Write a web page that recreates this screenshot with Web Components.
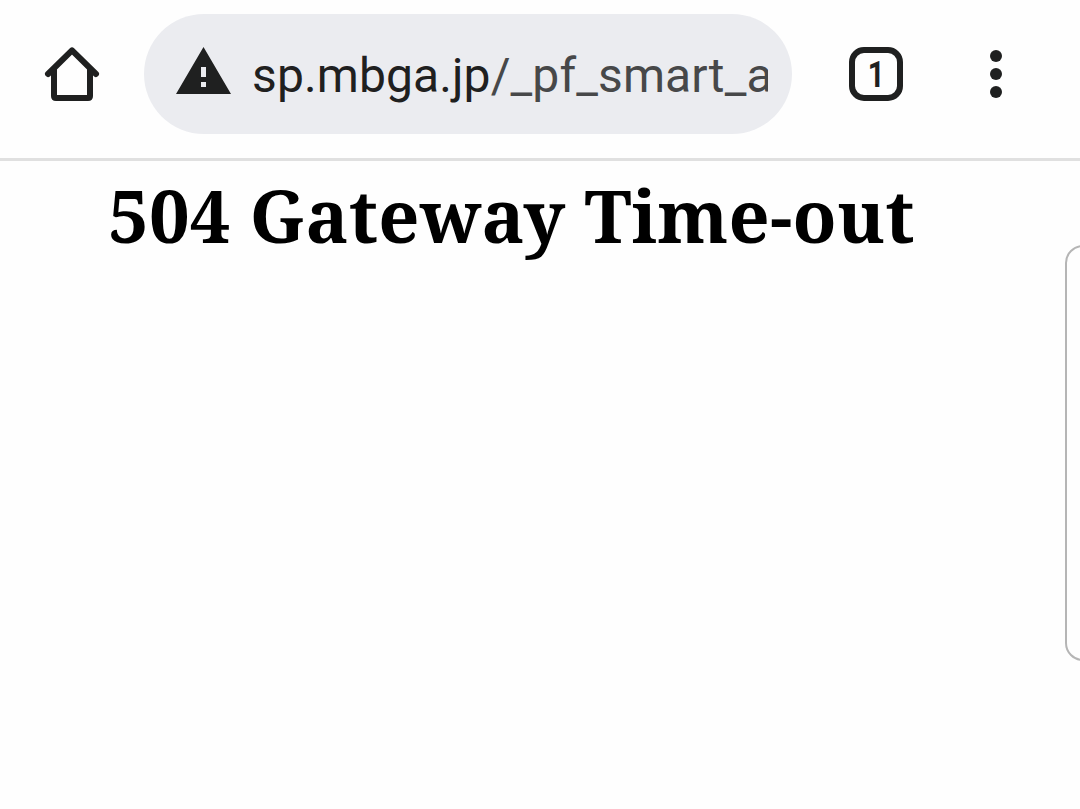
<!DOCTYPE html>
<html lang="en">
<head>
<meta charset="UTF-8">
<title>504 Gateway Time-out</title>
<style>
    body {
        margin: 0;
        height: 809px;
        overflow: hidden;
        background: #fefefe;
        color: #1f2020;
        font-family: Roboto, sans-serif;
    }
</style>
</head>
<body>
<browser-toolbar>
    <home-button></home-button>
    <address-bar>sp.mbga.jp<span slot="path">/_pf_smart_a</span></address-bar>
    <tab-counter>1</tab-counter>
    <menu-button></menu-button>
</browser-toolbar>
<error-page>
    504 Gateway Time-out
    <edge-panel slot="side"></edge-panel>
</error-page>

<script>
class BrowserToolbar extends HTMLElement {
    connectedCallback() {
        this.attachShadow({ mode: 'open' });
        this.shadowRoot.innerHTML = `
            <style>
                :host {
                    display: grid;
                    grid-template-columns: 144px 648px 168px 72px;
                    height: 120px;
                    padding: 14px 0 24px;
                    border-bottom: 3px solid #e0e0e0;
                }
            </style>
            <slot></slot>
        `;
    }
}

class HomeButton extends HTMLElement {
    connectedCallback() {
        this.attachShadow({ mode: 'open' });
        this.shadowRoot.innerHTML = `
            <style>
                :host {
                    display: flex;
                    align-items: center;
                    justify-content: center;
                }
            </style>
            <svg width="60" height="60" viewBox="0 0 60 60" fill="none" stroke="currentColor" stroke-width="6" stroke-linecap="round" stroke-linejoin="round">
                <path d="M6 30 L30 6.4 L54 30"/>
                <path d="M12 26 V52 Q12 54 14 54 H46 Q48 54 48 52 V26"/>
            </svg>
        `;
    }
}

class AddressBar extends HTMLElement {
    connectedCallback() {
        this.attachShadow({ mode: 'open' });
        this.shadowRoot.innerHTML = `
            <style>
                :host {
                    display: flex;
                    align-items: center;
                    box-sizing: border-box;
                    padding: 0 24px 0 32px;
                    border-radius: 60px;
                    background: #ebecf0;
                }

                svg {
                    flex: none;
                    margin-right: 21px;
                }

                .url {
                    width: 516px;
                    overflow: hidden;
                    white-space: nowrap;
                    font-size: 48px;
                    line-height: 60px;
                    letter-spacing: 0.11px;
                    padding-top: 3px;
                }

                ::slotted([slot="path"]) {
                    color: #474849;
                }
            </style>
            <svg width="55" height="54" viewBox="0 0 55 54">
                <path fill="currentColor" fill-rule="evenodd" d="M27.5 0 L55 47 H0 Z M25 20 V30 H30 V20 Z M25 35 V40 H30 V35 Z"/>
            </svg>
            <div class="url"><slot></slot><slot name="path"></slot></div>
        `;
    }
}

class TabCounter extends HTMLElement {
    connectedCallback() {
        this.attachShadow({ mode: 'open' });
        this.shadowRoot.innerHTML = `
            <style>
                :host {
                    display: flex;
                    align-items: center;
                    justify-content: center;
                }

                .box {
                    width: 42px;
                    height: 42px;
                    border: 6px solid currentColor;
                    border-radius: 15px;
                    font-size: 36px;
                    font-weight: 700;
                    line-height: 44px;
                    text-align: center;
                }

                .count {
                    display: inline-block;
                    transform: scaleX(0.82);
                }
            </style>
            <div class="box"><span class="count"><slot></slot></span></div>
        `;
    }
}

class MenuButton extends HTMLElement {
    connectedCallback() {
        this.attachShadow({ mode: 'open' });
        this.shadowRoot.innerHTML = `
            <style>
                :host {
                    display: flex;
                    align-items: center;
                    justify-content: center;
                }
            </style>
            <svg width="12" height="48" viewBox="0 0 12 48" fill="currentColor">
                <circle cx="6" cy="6" r="6"/>
                <circle cx="6" cy="24" r="6"/>
                <circle cx="6" cy="42" r="6"/>
            </svg>
        `;
    }
}

class ErrorPage extends HTMLElement {
    connectedCallback() {
        this.attachShadow({ mode: 'open' });
        this.shadowRoot.innerHTML = `
            <style>
                :host {
                    display: flex;
                    height: 648px;
                    overflow: hidden;
                }

                h1 {
                    flex: none;
                    box-sizing: border-box;
                    width: 1065px;
                    margin: 0;
                    padding: 5px 0 0 108px;
                    color: #000;
                    font: 700 72px/98px "Noto Serif", "Droid Serif", "DejaVu Serif", serif;
                    letter-spacing: 0.24px;
                    white-space: nowrap;
                }
            </style>
            <h1><slot></slot></h1>
            <slot name="side"></slot>
        `;
    }
}

class EdgePanel extends HTMLElement {
    connectedCallback() {
        this.attachShadow({ mode: 'open' });
        this.shadowRoot.innerHTML = `
            <style>
                :host {
                    display: block;
                    flex: none;
                    box-sizing: border-box;
                    width: 60px;
                    height: 416px;
                    margin-top: 84px;
                    border: 2px solid #b5b5b5;
                    border-radius: 18px;
                }
            </style>
        `;
    }
}

customElements.define('browser-toolbar', BrowserToolbar);
customElements.define('home-button', HomeButton);
customElements.define('address-bar', AddressBar);
customElements.define('tab-counter', TabCounter);
customElements.define('menu-button', MenuButton);
customElements.define('error-page', ErrorPage);
customElements.define('edge-panel', EdgePanel);
</script>
</body>
</html>
